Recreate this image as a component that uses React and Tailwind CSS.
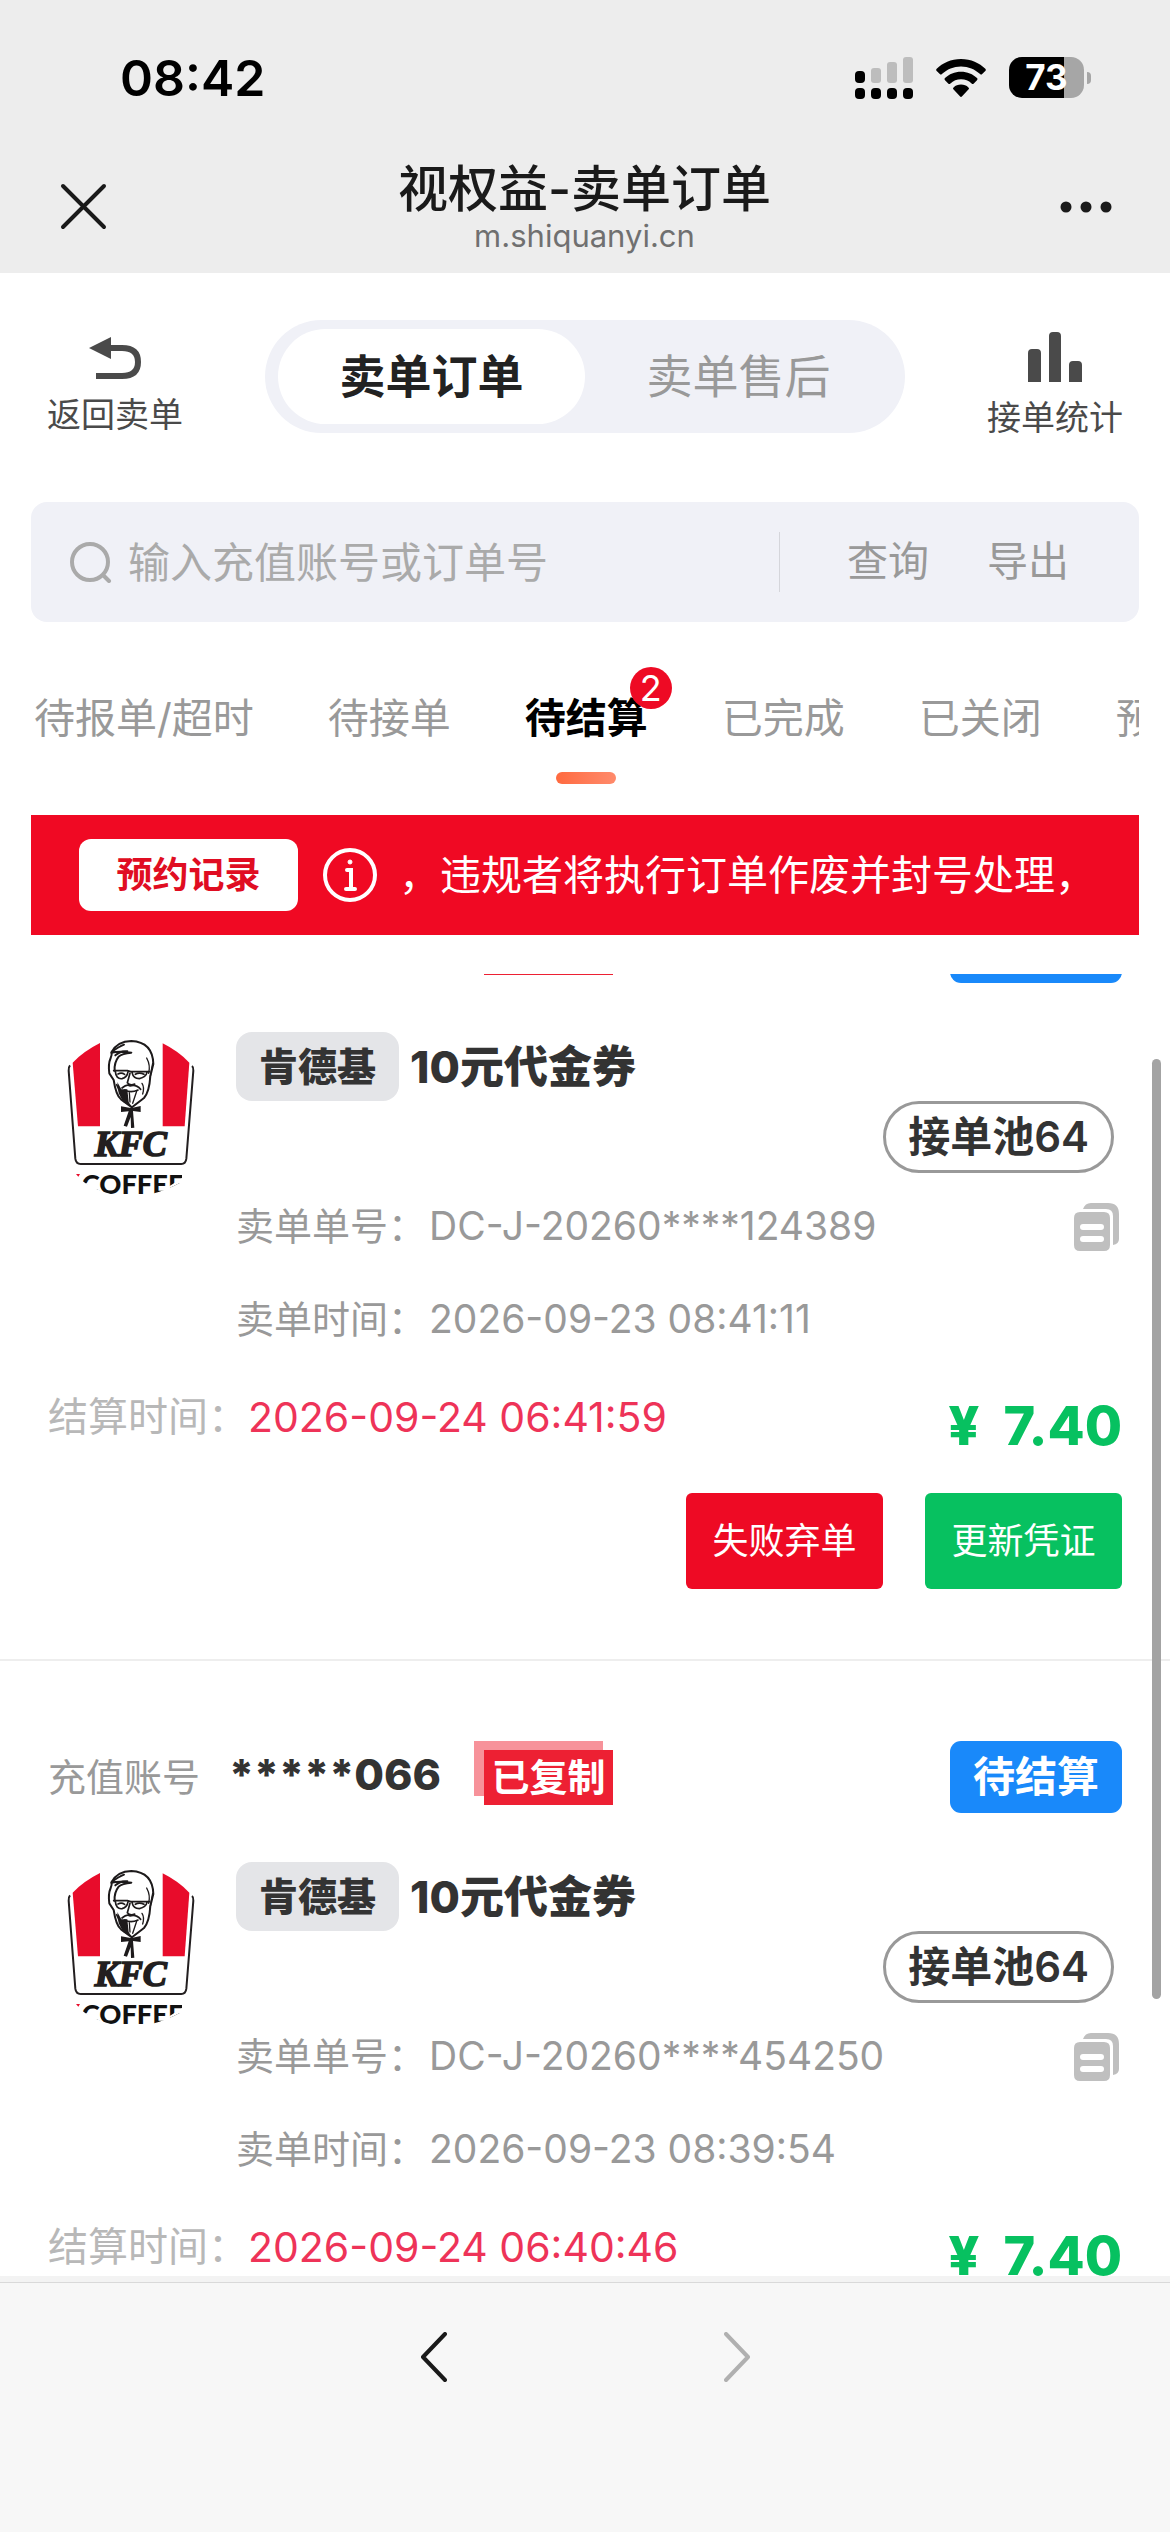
import { useState } from "react";
import clsx from "clsx";

const TABS = [
  { id: "report", label: "待报单/超时" },
  { id: "accept", label: "待接单" },
  { id: "settle", label: "待结算", count: 2 },
  { id: "done", label: "已完成" },
  { id: "closed", label: "已关闭" },
  { id: "booking", label: "预约" },
];

const ORDERS = [
  {
    account: "",
    brand: "肯德基",
    title: "10元代金券",
    pool: "接单池64",
    orderNo: "DC-J-20260****124389",
    soldAt: "2026-09-23 08:41:11",
    settleAt: "2026-09-24 06:41:59",
    price: "7.40",
  },
  {
    account: "*****066",
    brand: "肯德基",
    title: "10元代金券",
    pool: "接单池64",
    orderNo: "DC-J-20260****454250",
    soldAt: "2026-09-23 08:39:54",
    settleAt: "2026-09-24 06:40:46",
    price: "7.40",
  },
];

const SignalIcon = () => (
  <svg viewBox="0 0 58 42" className="h-[42px] w-[58px]">
    <g fill="#bdbdbd">
      <rect x="16" y="11" width="10" height="15" rx="3" />
      <rect x="32" y="5" width="10" height="21" rx="3" />
      <rect x="48" y="0" width="10" height="26" rx="3" />
    </g>
    <rect x="0" y="14" width="10" height="12" rx="4" />
    {[0, 16, 32, 48].map((x) => (
      <rect key={x} x={x} y="31" width="10" height="11" rx="4" />
    ))}
  </svg>
);

const WifiIcon = () => (
  <svg viewBox="0 0 50 38" className="h-[38px] w-[50px]">
    <path d="M25 0C35 0 43.500 4 49.300 9.800a1.600 1.600 0 0 1 0 2.200L46.200 15a1.500 1.500 0 0 1-2.100 0C39 10.200 32.400 7.400 25 7.400S11 10.200 5.900 15a1.500 1.500 0 0 1-2.100 0L.7 12a1.600 1.600 0 0 1 0-2.200C6.500 4 15 0 25 0z" />
    <path d="M25 12.800c6.300 0 11.900 2.400 16 6.300a1.500 1.500 0 0 1 0 2.200l-3.200 3.100a1.600 1.600 0 0 1-2.200 0A15.300 15.300 0 0 0 25 20.200c-4.100 0-7.800 1.600-10.600 4.200a1.600 1.600 0 0 1-2.200 0L9 21.300a1.500 1.500 0 0 1 0-2.200c4.100-3.900 9.700-6.300 16-6.300z" />
    <path d="M25 25.600c2.900 0 5.500 1 7.400 2.800a1.400 1.400 0 0 1 0 2.100l-6.300 6.800a1.500 1.500 0 0 1-2.200 0l-6.300-6.800a1.400 1.400 0 0 1 0-2.100c1.900-1.800 4.500-2.800 7.400-2.800z" />
  </svg>
);

const Battery = () => (
  <div className="flex items-center gap-[3px]">
    <div className="flex h-[41px] w-[75px] items-center justify-center rounded-[13px] bg-[linear-gradient(90deg,#000_73%,#a6a6a6_73%)] text-[35px] leading-[41px] font-bold text-white">
      73
    </div>
    <div className="h-3 w-1 rounded-r-full bg-[#a6a6a6]" />
  </div>
);

const KfcLogo = () => (
  <svg viewBox="75 105 396 489" className="h-[163px] w-[132px]">
    <defs>
      <clipPath id="logo-crop">
        <path d="M75 105H471V510L440 530Q360 582 272 582T118 530L75 510Z" />
      </clipPath>
    </defs>
    <g clipPath="url(#logo-crop)">
      <path d="M98 182Q130 148 180 123V373H114Z" fill="#e80c2b" />
      <path d="M448 182Q416 148 368 124V373H434Z" fill="#e80c2b" />
      <path d="M90 190Q85 196 86 206L106 470Q108 486 122 486H424Q437 486 439 470L460 206Q461 196 456 192" fill="none" stroke="#231f20" strokeWidth="6" />
      {/* hair and face outline */}
      <g fill="none" stroke="#1d1a1b" strokeLinecap="round" strokeLinejoin="round">
        <path d="M215 150Q232 118 274 117Q338 120 340 186L331 222Q328 270 312 288L276 316L243 292Q228 280 221 234L208 214Q204 186 212 168Q216 160 215 150Z" strokeWidth="6" />
        <path d="M214 152Q238 146 274 152Q246 154 236 164Q222 182 224 206M215 150Q236 134 252 128M226 160Q242 146 262 148" strokeWidth="6" />
        <path d="M320 168Q332 190 326 214M338 184Q334 204 330 230" strokeWidth="4" />
        <path d="M221 206H262L272 209H328M226 208Q228 232 246 230Q262 226 264 209M276 211Q280 230 298 230Q318 226 322 209" strokeWidth="5" />
        <path d="M234 216Q244 210 254 217M286 217Q298 210 312 217" strokeWidth="5" />
        <path d="M270 214L262 242Q270 252 284 246M246 258Q262 244 270 252Q288 246 302 262M254 264Q272 274 294 264M230 248Q240 270 246 286" strokeWidth="5" />
        <path d="M306 244Q314 256 308 276M290 268L278 304M268 272L270 300" strokeWidth="4" />
      </g>
      <path d="M232 240L244 262L262 262L266 300L276 316L250 300L236 274Z" fill="#1d1a1b" />
      {/* string tie */}
      <path d="M243 313L268 317H278L302 312V330L279 327L283 377L273 378L272 345L261 374L251 371L266 328L243 330Z" fill="#1d1a1b" />
      <text x="272" y="463" textAnchor="middle" fontSize="108" fontWeight="700" fontStyle="italic" fill="#231f20" stroke="#231f20" strokeWidth="5" className="font-['Liberation_Serif',serif]">
        KFC
      </text>
      <path d="M108 516h12l-5 8z" fill="#e80c2b" />
      <text x="125" y="577" fontSize="82" fontWeight="900" fill="#111" className="font-[Lato,sans-serif]">
        COFFEE
      </text>
      {/* round crop cuts the first and last letters */}
      <path d="M100 534L135 545L152 536L182 560V590H100ZM374 562L426 528H471V590H374ZM426 505H471V590H426Z" fill="#fff" />
    </g>
  </svg>
);

const CopyIcon = () => (
  <svg viewBox="0 0 45 48" className="h-12 w-[45px]" fill="#bfbfbf">
    <path d="M9 6Q11 0 17 0H34Q45 0 45 11V36Q45 41 39 42V13Q39 6 32 6Z" />
    <path fillRule="evenodd" d="M6 9H30Q36 9 36 15V42Q36 48 30 48H6Q0 48 0 42V15Q0 9 6 9ZM9 21A3 3 0 0 0 9 27H27A3 3 0 0 0 27 21ZM9 33A3 3 0 0 0 9 39H27A3 3 0 0 0 27 33Z" />
  </svg>
);

const CopiedStamp = () => (
  <div className="relative mb-2 h-16 w-[139px]">
    <div className="absolute top-0 left-0 h-[55px] w-[129px] bg-[#f7929a]" />
    <div className="absolute right-0 bottom-0 flex h-[55px] w-[129px] items-center justify-center bg-[#ed2033] text-[38px] leading-[55px] font-bold text-white">
      已复制
    </div>
  </div>
);

const StatusBar = () => (
  <div className="flex h-[155px] items-center justify-between pr-[79px] pl-[120px]">
    <span className="text-[50px] leading-[60px] font-semibold">08:42</span>
    <div className="flex items-center gap-[23px]">
      <SignalIcon />
      <WifiIcon />
      <Battery />
    </div>
  </div>
);

const NavBar = () => (
  <div className="flex h-[118px] items-start justify-between px-[58px]">
    <button aria-label="关闭" className="mt-[26px]">
      <svg viewBox="0 0 51 51" className="size-[51px]" fill="none" stroke="#1a1a1a" strokeWidth="4" strokeLinecap="round">
        <path d="M5 5L46 46M46 5L5 46" />
      </svg>
    </button>
    <div className="flex flex-col items-center">
      <h1 className="text-[50px] leading-[68px] font-medium text-[#1a1a1a]">视权益-卖单订单</h1>
      <p className="text-[31px] leading-[26px] text-[#707070]">m.shiquanyi.cn</p>
    </div>
    <button aria-label="更多" className="mt-[46px]">
      <svg viewBox="0 0 52 12" className="h-3 w-[52px]" fill="#1a1a1a">
        <circle cx="6" cy="6" r="5.500" />
        <circle cx="26" cy="6" r="5.500" />
        <circle cx="46" cy="6" r="5.500" />
      </svg>
    </button>
  </div>
);

const OrderCard = ({ order }) => (
  <article className="border-b-2 border-[#eeeeee] px-12 pt-20 pb-[70px]">
    <div className="flex h-[72px] items-center">
      <span className="w-[181px] text-[38px] leading-[54px] text-[#999]">充值账号</span>
      <span className="w-[245px] pb-[6px] text-[43px] leading-[54px] font-extrabold text-[#333]">{order.account}</span>
      <CopiedStamp />
      <span className="ml-auto h-[72px] rounded-[11px] bg-[#1989fa] px-[23px] text-[42px] leading-[72px] font-bold text-white">待结算</span>
    </div>

    <div className="mt-[49px] flex">
      <div className="w-[188px] shrink-0 pt-[5px] pl-[17px]">
        <KfcLogo />
      </div>
      <div className="flex-1">
        <div className="flex items-center gap-[11px]">
          <span className="h-[69px] rounded-2xl bg-[#e4e5e8] px-[23px] text-[39px] leading-[69px] font-black text-[#333]">{order.brand}</span>
          <h2 className="text-[44px] leading-[60px] font-extrabold text-[#333]">{order.title}</h2>
        </div>
        <div className="flex justify-end pr-2">
          <span className="h-[72px] rounded-full border-[3px] border-[#999] px-[22px] text-[42px] leading-[66px] font-semibold text-[#333]">{order.pool}</span>
        </div>
        <div className="mt-[7px] flex h-[93px] items-center justify-between text-[#999]">
          <p className="flex items-center">
            <span className="w-[193px] text-[38px]">卖单单号：</span>
            <span className="text-[39px]">{order.orderNo}</span>
          </p>
          <button aria-label="复制单号" className="mr-[3px]">
            <CopyIcon />
          </button>
        </div>
        <div className="flex h-[93px] items-center text-[#999]">
          <span className="w-[193px] text-[38px]">卖单时间：</span>
          <span className="text-[39px]">{order.soldAt}</span>
        </div>
      </div>
    </div>

    <div className="flex h-[127px] items-center justify-between">
      <p className="flex items-center pb-[26px] leading-[54px] whitespace-nowrap">
        <span className="w-[200px] text-[40px] text-[#b8b8b8]">结算时间：</span>
        <span className="text-[41px] text-[#ee3358]">{order.settleAt}</span>
      </p>
      <p className="flex items-center gap-6 pb-2 text-[54px] leading-[60px] font-extrabold text-[#07c160]">
        <span>¥</span>
        <span>{order.price}</span>
      </p>
    </div>

    <div className="flex justify-end gap-[42px] text-[36px] text-white">
      <button className="h-24 w-[197px] rounded-md bg-[#ee0a24]">失败弃单</button>
      <button className="h-24 w-[197px] rounded-md bg-[#07c160]">更新凭证</button>
    </div>
  </article>
);

const App = () => {
  const [activeTab, setActiveTab] = useState("settle");
  const [keyword, setKeyword] = useState("");

  return (
    <div className="flex h-screen flex-col overflow-hidden bg-white font-[Inter,'Noto_Sans_CJK_SC',sans-serif] text-black" lang="zh-CN">
      <header className="shrink-0 bg-[#ededed]">
        <StatusBar />
        <NavBar />
      </header>

      <div className="flex shrink-0 items-start justify-between px-[47px] pt-[47px]">
        <button className="flex flex-col items-center pt-[17px] text-[34px] leading-[42px] text-[#4a4a4a]">
          <svg viewBox="0 0 52 42" className="mb-[15px] h-[42px] w-[52px]" fill="#4a4a4a">
            <path d="M0 11L22 0V8H33Q52 8 52 25T33 42H7V36H33Q46 36 46 25T33 14H22V22Z" />
          </svg>
          返回卖单
        </button>
        <div className="flex h-[113px] w-[640px] rounded-full bg-[#f0f1f7] px-[13px] py-[9px] text-[46px]">
          <button className="flex-1 rounded-full bg-white font-bold text-[#222]">卖单订单</button>
          <button className="flex-1 rounded-full text-[#999]">卖单售后</button>
        </div>
        <button className="flex flex-col items-center pt-3 text-[34px] leading-[42px] text-[#4a4a4a]">
          <svg viewBox="0 0 54 50" className="mb-[15px] h-[50px] w-[54px]" fill="#4a4a4a">
            <path d="M0 50V21Q0 17 4 17H9Q13 17 13 21V50ZM21 50V4Q21 0 25 0H29Q33 0 33 4V50ZM41 50V33Q41 29 45 29H50Q54 29 54 33V50Z" />
          </svg>
          接单统计
        </button>
      </div>

      <form className="mx-[31px] mt-[63px] flex h-[120px] shrink-0 items-center rounded-2xl bg-[#f0f1f7] pr-[70px] pl-[39px] text-[41px] text-[#999]">
        <svg viewBox="0 0 42 42" className="size-[42px] shrink-0" fill="none" stroke="#aaa" strokeWidth="4" strokeLinecap="round">
          <circle cx="20" cy="21" r="18" />
          <path d="M34 35L39 40" />
        </svg>
        <input
          type="text"
          aria-label="搜索订单"
          placeholder="输入充值账号或订单号"
          className="ml-4 h-[60px] min-w-0 flex-1 bg-transparent text-[42px] outline-none placeholder:text-[#aaa]"
          value={keyword}
          onChange={(e) => setKeyword(e.target.value)}
        />
        <div className="h-[60px] w-px bg-[#d5d6db]" />
        <button type="button" className="ml-[67px]">查询</button>
        <button type="button" className="ml-[58px]">导出</button>
      </form>

      <nav className="mx-[31px] flex h-[193px] shrink-0 gap-[74px] overflow-hidden pl-[3px] text-[41px] whitespace-nowrap">
        {TABS.map((tab) => (
          <button
            key={tab.id}
            onClick={() => setActiveTab(tab.id)}
            className={clsx("relative shrink-0", tab.id === activeTab ? "font-bold text-black" : "text-[#999]")}
          >
            {tab.label}
            {tab.count && (
              <span className="absolute top-[45px] -right-[24px] size-[42px] rounded-full bg-[#ee0a24] text-center text-[36px] leading-[42px] font-normal text-white">
                {tab.count}
              </span>
            )}
            {tab.id === activeTab && (
              <span className="absolute bottom-[31px] left-1/2 h-3 w-[60px] -translate-x-1/2 rounded-full bg-linear-to-r from-[#ff6a3f] to-[#ff8a6b]" />
            )}
          </button>
        ))}
      </nav>

      <div className="mx-[31px] flex h-[120px] shrink-0 items-center overflow-hidden bg-[#f00923] pl-12 text-white">
        <button className="h-[72px] w-[219px] shrink-0 rounded-xl bg-white text-[36px] font-bold text-[#e00d22]">预约记录</button>
        <svg viewBox="0 0 54 54" className="ml-[25px] size-[54px] shrink-0" fill="none" stroke="#fff" strokeWidth="4">
          <circle cx="27" cy="27" r="25" />
          <path d="M24 22H28V41M23 41H32" strokeLinecap="round" />
          <circle cx="27" cy="14" r="2" fill="#fff" strokeWidth="1" />
        </svg>
        <p className="ml-[22px] text-[41px] leading-[60px] whitespace-nowrap">，违规者将执行订单作废并封号处理，</p>
      </div>

      <main className="relative mt-[39px] min-h-0 flex-1 overflow-hidden">
        {/* list is scrolled past the first card's header */}
        <div className="-mt-[143px]">
          {ORDERS.map((order) => (
            <OrderCard key={order.orderNo} order={order} />
          ))}
        </div>
        <div className="absolute top-[85px] right-[9px] bottom-[277px] w-[9px] rounded-full bg-[#a3a3a3]" />
      </main>

      <footer className="shrink-0 border-t-[6px] border-[#f3f3f3] bg-[#f7f7f7]">
        <div className="flex h-[250px] items-start justify-center gap-[277px] border-t border-[#d9d9d9] pt-[49px]">
          <button aria-label="后退">
            <svg viewBox="0 0 27 50" className="h-[50px] w-[27px]" fill="none" stroke="#1a1a1a" strokeWidth="4" strokeLinecap="round" strokeLinejoin="round">
              <path d="M25 2L3 25L25 48" />
            </svg>
          </button>
          <button aria-label="前进" disabled>
            <svg viewBox="0 0 27 50" className="h-[50px] w-[27px]" fill="none" stroke="#b0b0b0" strokeWidth="4" strokeLinecap="round" strokeLinejoin="round">
              <path d="M2 2L24 25L2 48" />
            </svg>
          </button>
        </div>
      </footer>
    </div>
  );
};

export default App;
